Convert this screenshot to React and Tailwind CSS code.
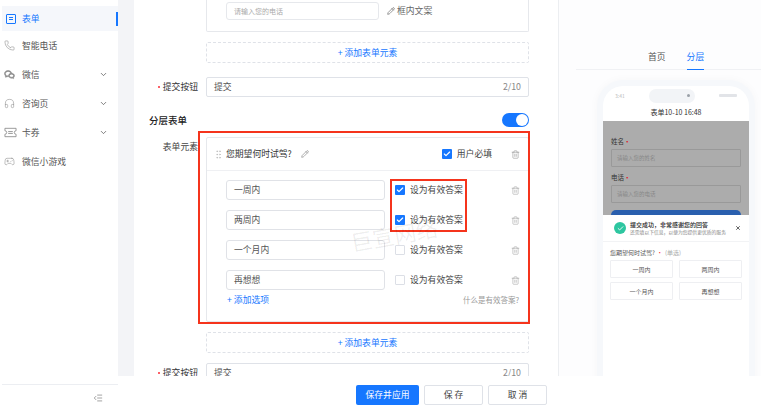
import { ChevronDown, Phone, Headphones, Gamepad2, Pencil, Trash2, Check, X, IndentDecrease, GripVertical } from "lucide-react";
import { RiWechatLine } from "react-icons/ri";

function TicketIcon({ size, className }) {
  return (
    <svg width={size + 2} height={size} viewBox="0 0 14 11" fill="none" stroke="currentColor" strokeWidth="0.9" className={className}>
      <path d="M1 1h12v2.6a1.9 1.9 0 0 0 0 3.8V10H1V7.4a1.9 1.9 0 0 0 0-3.8z" />
      <path d="M4.5 4.5h5M4.5 6.5h5" />
    </svg>
  );
}

const menu = [
  { label: "智能电话", Icon: Phone },
  { label: "微信", Icon: RiWechatLine, arrow: true },
  { label: "咨询页", Icon: Headphones, arrow: true },
  { label: "卡券", Icon: TicketIcon, arrow: true },
  { label: "微信小游戏", Icon: Gamepad2 },
];

const options = [
  { label: "一周内", checked: true },
  { label: "两周内", checked: true },
  { label: "一个月内", checked: false },
  { label: "再想想", checked: false },
];

function Box({ checked }) {
  return (
    <span
      className={
        checked
          ? "flex h-[10px] w-[10px] items-center justify-center rounded-[1px] bg-[#1677ff]"
          : "h-[10px] w-[10px] rounded-[1px] border border-[#dcdfe6] bg-white"
      }
    >
      {checked && <Check size={8} strokeWidth={3.5} className="text-white" />}
    </span>
  );
}

function AddElement() {
  return (
    <div className="flex h-[21px] items-center justify-center rounded-[2px] border border-dashed border-[#dfe2e8] text-[8.8px] text-[#1677ff]">
      + 添加表单元素
    </div>
  );
}

function SubmitRow() {
  return (
    <div className="flex items-start">
      <div className="flex h-[20px] w-[57px] shrink-0 items-center justify-end gap-[2px] pr-[8px] text-[8.8px] text-[#333]">
        <span className="mr-[1px] h-[2px] w-[2px] rounded-full bg-red-500" />
        提交按钮
      </div>
      <div className="flex h-[20px] flex-1 items-center justify-between rounded-[2px] border border-[#dfe2e8] px-[7px] text-[8.8px] text-[#555]">
        <span>提交</span>
        <span className="text-[#888]">2/10</span>
      </div>
    </div>
  );
}

function Sidebar() {
  return (
    <aside className="flex w-[118px] shrink-0 flex-col bg-white">
      <div className="flex-1 pl-[2px] pt-[6px]">
        <div className="flex h-[25px] items-center justify-between bg-[#f5f7fb] pl-[4px]">
          <div className="flex items-center gap-[6px] text-[8.8px] text-[#1677ff]">
            <span className="flex h-[10px] w-[10px] flex-col justify-center gap-[1.5px] rounded-[1px] border border-[#1677ff] px-[2px]">
              <span className="h-px bg-[#1677ff]" />
              <span className="h-px bg-[#1677ff]" />
            </span>
            表单
          </div>
          <span className="h-[14px] w-[2px] bg-[#1677ff]" />
        </div>
        {menu.map(({ label, Icon, arrow }) => (
          <div key={label} className="flex h-[29px] items-center justify-between pl-[2px] pr-[10px] text-[8.8px] text-[#555]">
            <div className="flex items-center">
              <span className="flex w-[18px] justify-start">
                <Icon size={11} strokeWidth={1.2} className="text-[#888]" />
              </span>
              {label}
            </div>
            {arrow && <ChevronDown size={9} strokeWidth={2} className="text-[#555]" />}
          </div>
        ))}
      </div>
      <div className="ml-[2px] flex h-[26px] items-center justify-end border-t border-[#eceef2] pr-[15px]">
        <IndentDecrease size={10} strokeWidth={1.3} className="text-[#555]" />
      </div>
    </aside>
  );
}

function OptionsCard() {
  return (
    <div className="rounded-[2px] border border-[#e6e8ec] bg-white">
      <div className="flex h-[33px] items-center border-b border-[#eff0f3] pl-[6px] pr-[8px]">
        <GripVertical size={11} strokeWidth={1.5} className="text-[#bbb]" />
        <span className="ml-[2px] text-[8.8px] text-[#333]">您期望何时试驾?</span>
        <Pencil size={8} className="ml-[9px] text-[#888]" />
        <div className="ml-auto mr-[19px] flex items-center gap-[5px] text-[8.8px] text-[#444]">
          <Box checked />
          用户必填
        </div>
        <Trash2 size={9} strokeWidth={1.4} className="text-[#888]" />
      </div>
      <div className="flex flex-col gap-[10px] pl-[19px] pr-[8px] pt-[9px]">
        {options.map((o) => (
          <div key={o.label} className="flex h-[20px] items-center">
            <div className="flex h-[20px] w-[159px] items-center rounded-[3px] border border-[#e0e2e7] pl-[7px] text-[8.8px] text-[#555]">
              {o.label}
            </div>
            <div className="ml-[10px] flex items-center gap-[5px] text-[8.8px] text-[#444]">
              <Box checked={o.checked} />
              设为有效答案
            </div>
            <Trash2 size={9} strokeWidth={1.4} className="ml-auto text-[#999]" />
          </div>
        ))}
      </div>
      <div className="flex h-[31px] items-start justify-between pl-[20px] pr-[9px] pt-[3px] text-[8.8px]">
        <span className="text-[#1677ff]">+ 添加选项</span>
        <span className="pt-[1px] text-[7.5px] text-[#999]">什么是有效答案?</span>
      </div>
    </div>
  );
}

function MainPanel() {
  return (
    <main className="relative h-[410px] w-[425px] shrink-0 overflow-hidden border-r border-[#eceef1] bg-white pl-[15px] pr-[29px]">
      <div className="ml-[57px]">
        <div className="flex h-[32px] items-start rounded-b-[2px] border border-t-0 border-[#e6e8ec] pl-[19px] pt-[2px]">
          <div className="flex h-[18px] w-[153px] items-center rounded-[3px] border border-[#e6e8ec] pl-[7px] text-[7px] text-[#aaa]">
            请输入您的电话
          </div>
          <div className="ml-[8px] flex h-[18px] items-center gap-[2px] text-[8.8px] text-[#666]">
            <Pencil size={8} />
            框内文案
          </div>
        </div>
        <div className="mt-[10px]">
          <AddElement />
        </div>
      </div>
      <div className="mt-[14px]">
        <SubmitRow />
      </div>
      <div className="mt-[16px] flex h-[14px] items-center justify-between">
        <span className="text-[9.5px] font-medium text-[#222]">分层表单</span>
        <span className="flex h-[14px] w-[27px] items-center justify-end rounded-full bg-[#1677ff] pr-[1px]">
          <span className="h-[12px] w-[12px] rounded-full bg-white" />
        </span>
      </div>
      <div className="mt-[10px] flex">
        <div className="w-[57px] shrink-0 pr-[8px] pt-[3px] text-right text-[8.8px] text-[#444]">表单元素</div>
        <div className="flex-1">
          <OptionsCard />
          <div className="mt-[10px]">
            <AddElement />
          </div>
        </div>
      </div>
      <div className="mt-[10px]">
        <SubmitRow />
      </div>
      {/* 红色标注框 */}
      <div className="absolute left-[64px] top-[131px] h-[193px] w-[332px] border-2 border-[#f5341c]" />
      <div className="absolute left-[256px] top-[179px] h-[53px] w-[77px] border-2 border-[#f5341c]" />
      <div className="absolute left-[216px] top-[218px] -rotate-[10deg] text-[22px] text-black/[.07]">巨宣网络</div>
    </main>
  );
}

function PhoneFrame() {
  return (
    <div className="ml-[38px] mr-[6px] mt-[10px] h-[330px] rounded-t-[26px] border-x-[6px] border-t-[6px] border-[#f6f8fb] bg-white shadow-[0_0_10px_rgba(0,0,0,0.03)]">
      <div className="flex h-[19px] items-center justify-between px-[12px] text-[5px] text-[#bbb]">
        <span>3:41</span>
        <span className="flex h-[14px] w-[46px] items-center justify-end rounded-full bg-[#f2f4f7] pr-[5px]">
          <span className="h-[3px] w-[3px] rounded-full bg-[#9aa0a8]" />
        </span>
        <span className="h-[3px] w-[18px] rounded-[1px] bg-[#e2e4e8]" />
      </div>
      <div className="flex h-[16px] items-center justify-center pb-[1px] text-[7px] text-[#333]">表单10-10 16:48</div>
      <div className="h-[89px] bg-[#acacac] px-[8px] pt-[16px] text-[6.5px] text-[#333]">
        <div className="flex h-[10px] items-center">姓名<span className="text-red-600">•</span></div>
        <div className="mt-[2px] flex h-[18px] items-center rounded-[1px] border border-[#999] pl-[5px] text-[5.5px] text-[#888]">请输入您的姓名</div>
        <div className="mt-[6px] flex h-[10px] items-center">电话<span className="text-red-600">•</span></div>
        <div className="mt-[2px] flex h-[18px] items-center rounded-[1px] border border-[#999] pl-[5px] text-[5.5px] text-[#888]">请输入您的电话</div>
      </div>
      <div className="h-[5px] bg-[#acacac] px-[8px]">
        <div className="h-[5px] rounded-t-full bg-[#2a5fae]" />
      </div>
      <div className="rounded-t-[8px] bg-white">
        <div className="flex h-[27px] items-center border-b border-[#f2f3f5] pl-[11px] pr-[8px]">
          <span className="flex h-[12px] w-[12px] shrink-0 items-center justify-center rounded-full bg-[#2dc6a0]">
            <Check size={7} strokeWidth={3} className="text-white" />
          </span>
          <div className="ml-[4px] flex-1 leading-none">
            <div className="whitespace-nowrap text-[6px] font-medium text-[#222]">提交成功，非常感谢您的回答</div>
            <div className="mt-[2px] whitespace-nowrap text-[4.8px] text-[#888]">还需填以下信息，以便为您提供更优质的服务</div>
          </div>
          <X size={6} strokeWidth={3} className="shrink-0 text-[#333]" />
        </div>
        <div className="px-[7px] pt-[5px]">
          <div className="flex h-[10px] items-center gap-[2px] text-[6px] text-[#555]">
            您期望何时试驾? <span className="text-red-500">•</span> <span className="text-[#aaa]">(单选)</span>
          </div>
          <div className="mt-[3px] grid grid-cols-2 gap-x-[6px] gap-y-[4px]">
            {["一周内", "两周内", "一个月内", "再想想"].map((t) => (
              <div key={t} className="flex h-[18px] items-center justify-center rounded-[1px] border border-[#eeeff2] text-[6px] text-[#555]">
                {t}
              </div>
            ))}
          </div>
        </div>
      </div>
    </div>
  );
}

function Preview() {
  return (
    <section className="h-[410px] w-[202px] shrink-0 overflow-hidden bg-[#fdfdfe] pt-[39px]">
      <div className="ml-[17px] flex h-[31px] items-start gap-[21px] border-b border-[#f0f1f4] pl-[72px] text-[8.8px]">
        <span className="pt-[11px] text-[#555]">首页</span>
        <span className="h-[31px] border-b border-[#1677ff] pt-[11px] text-[#1677ff]">分层</span>
      </div>
      <PhoneFrame />
    </section>
  );
}

export default function App() {
  return (
    <div className="relative flex h-[410px] w-[766px] overflow-hidden bg-white font-['Noto_Sans_CJK_SC','Noto_Sans',sans-serif]">
      <Sidebar />
      <div className="h-[410px] w-[16px] shrink-0 bg-[#f3f4f7]" />
      <MainPanel />
      <Preview />
      {/* 底部操作栏 */}
      <div className="absolute bottom-0 left-[118px] right-0 flex h-[34px] items-start gap-[5px] bg-white pl-[238px] pt-[9px]">
        <button className="h-[20px] w-[63px] rounded-[2px] bg-[#1677ff] text-[8.8px] text-white">保存并应用</button>
        <button className="h-[20px] w-[59px] rounded-[2px] border border-[#dfe2e8] text-[8.8px] text-[#444]">保 存</button>
        <button className="h-[20px] w-[59px] rounded-[2px] border border-[#dfe2e8] text-[8.8px] text-[#444]">取 消</button>
      </div>
    </div>
  );
}
